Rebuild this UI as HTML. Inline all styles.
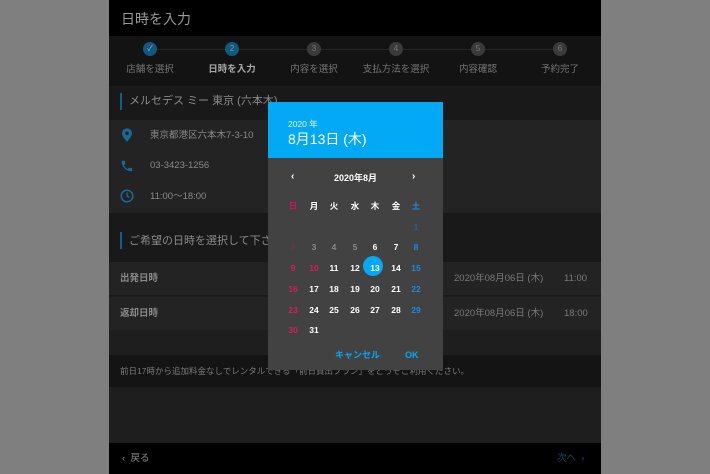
<!DOCTYPE html>
<html><head><meta charset="utf-8"><style>
*{margin:0;padding:0;box-sizing:border-box}
body{width:710px;height:474px;background:#7f7f7f;font-family:"Liberation Sans","Noto Sans CJK JP",sans-serif;position:relative;overflow:hidden}
.app{position:absolute;left:109px;top:0;width:492px;height:474px;background:#1e1e1e}
.abs{position:absolute}
.t{position:absolute;white-space:nowrap;line-height:12px}
.step{position:absolute;top:42px;width:82px;text-align:center;line-height:12px}
.step .c{width:14px;height:14px;border-radius:50%;background:#3a3a3a;color:#777;font-size:8px;line-height:14px;margin:0 auto;}
.step .l{font-size:9.5px;color:#767676;margin-top:8px}
.dlg{position:absolute;left:268px;top:102px;width:175px;height:268px;background:#424242}
.dh{height:56px;background:#03a9f4}
.cal span{position:absolute;width:20px;margin-left:-10px;text-align:center;font-size:8.5px;font-weight:bold;color:#fff;line-height:12px}
</style></head><body>
<div class="app">
 <div class="abs" style="left:0;top:0;width:492px;height:36px;background:#000"></div>
 <div class="t" style="left:12px;top:11px;font-size:14px;line-height:16px;color:#9a9a9a">日時を入力</div>
 <div class="abs" style="left:0;top:36px;width:492px;height:50px;background:#131313"></div>
 <div class="abs" style="left:40px;top:49px;width:415px;height:1px;background:#262626"></div>
 <div class="step" style="left:0"><div class="c" style="background:#11587e;color:#9ab">✓</div><div class="l">店舗を選択</div></div>
 <div class="step" style="left:82px"><div class="c" style="background:#11587e;color:#6a9ab8">2</div><div class="l" style="color:#a8a8a8;font-weight:bold">日時を入力</div></div>
 <div class="step" style="left:164px"><div class="c">3</div><div class="l">内容を選択</div></div>
 <div class="step" style="left:246px"><div class="c">4</div><div class="l">支払方法を選択</div></div>
 <div class="step" style="left:328px"><div class="c">5</div><div class="l">内容確認</div></div>
 <div class="step" style="left:410px"><div class="c">6</div><div class="l">予約完了</div></div>
 <div class="abs" style="left:0;top:86px;width:492px;height:34px;background:#191919"></div>
 <div class="abs" style="left:11px;top:93px;width:2px;height:17px;background:#135d85"></div>
 <div class="t" style="left:20px;top:95px;font-size:11px;line-height:13px;color:#8a8a8a">メルセデス ミー 東京 (六本木)</div>
 <div class="abs" style="left:0;top:120px;width:492px;height:93px;background:#232323"></div>
 <svg class="abs" style="left:13px;top:128px" width="10" height="14" viewBox="0 0 12 16"><path d="M6 0C2.7 0 0 2.6 0 5.9 0 10 6 16 6 16s6-6 6-10.1C12 2.6 9.3 0 6 0zm0 8.2A2.2 2.2 0 1 1 6 3.8a2.2 2.2 0 0 1 0 4.4z" fill="#1a6a98"/></svg>
 <div class="t" style="left:41px;top:130px;font-size:9.5px;color:#8a8a8a">東京都港区六本木7-3-10</div>
 <svg class="abs" style="left:11px;top:159px" width="14" height="14" viewBox="0 0 24 24"><path d="M6.6 10.8c1.4 2.8 3.8 5.1 6.6 6.6l2.2-2.2c.3-.3.7-.4 1-.2 1.1.4 2.3.6 3.6.6.6 0 1 .4 1 1V20c0 .6-.4 1-1 1C10.6 21 3 13.4 3 4c0-.6.4-1 1-1h3.5c.6 0 1 .4 1 1 0 1.3.2 2.5.6 3.6.1.3 0 .7-.2 1z" fill="#1a6a98"/></svg>
 <div class="t" style="left:41px;top:160px;font-size:9.5px;color:#8a8a8a">03-3423-1256</div>
 <svg class="abs" style="left:11px;top:189px" width="14" height="14" viewBox="0 0 14 14"><circle cx="7" cy="7" r="5.8" fill="none" stroke="#1a6a98" stroke-width="1.5"/><path d="M7 3.5V7l2.5 1.5" fill="none" stroke="#1a6a98" stroke-width="1.3"/></svg>
 <div class="t" style="left:41px;top:191px;font-size:9.5px;color:#8a8a8a">11:00〜18:00</div>
 <div class="abs" style="left:0;top:213px;width:492px;height:49px;background:#191919"></div>
 <div class="abs" style="left:11px;top:232px;width:2px;height:17px;background:#135d85"></div>
 <div class="t" style="left:20px;top:235px;font-size:11px;line-height:13px;color:#8a8a8a">ご希望の日時を選択して下さい</div>
 <div class="abs" style="left:0;top:262px;width:492px;height:34px;background:#232323;border-bottom:1px solid #1a1a1a"></div>
 <div class="t" style="left:11px;top:273px;font-size:9.5px;color:#8a8a8a;font-weight:bold">出発日時</div>
 <div class="t" style="left:345px;top:273px;font-size:9.5px;color:#7a7a7a">2020年08月06日 (木)</div>
 <div class="t" style="left:455px;top:273px;font-size:9.5px;color:#7a7a7a">11:00</div>
 <div class="abs" style="left:0;top:297px;width:492px;height:33px;background:#232323"></div>
 <div class="t" style="left:11px;top:308px;font-size:9.5px;color:#8a8a8a;font-weight:bold">返却日時</div>
 <div class="t" style="left:345px;top:308px;font-size:9.5px;color:#7a7a7a">2020年08月06日 (木)</div>
 <div class="t" style="left:455px;top:308px;font-size:9.5px;color:#7a7a7a">18:00</div>
 <div class="abs" style="left:0;top:330px;width:492px;height:25px;background:#1e1e1e"></div>
 <div class="abs" style="left:0;top:355px;width:492px;height:32px;background:#141414"></div>
 <div class="t" style="left:11px;top:365px;font-size:8.5px;color:#7a7a7a">前日17時から追加料金なしでレンタルできる「前日貸出プラン」をどうぞご利用ください。</div>
 <div class="abs" style="left:0;top:387px;width:492px;height:56px;background:#1e1e1e"></div>
 <div class="abs" style="left:0;top:443px;width:492px;height:31px;background:#000"></div>
 <div class="t" style="left:13px;top:453px;font-size:9.5px;color:#8a8a8a">‹&nbsp;&nbsp;戻る</div>
 <div class="t" style="left:448px;top:453px;font-size:9.5px;color:#0f4d70">次へ&nbsp;&nbsp;›</div>
</div>
<div class="dlg">
 <div class="dh"></div>
 <div class="t" style="left:20px;top:16px;font-size:8.5px;color:#dff3fd">2020 年</div>
 <div class="t" style="left:20px;top:29px;font-size:14px;line-height:16px;color:#fff">8月13日 (木)</div>
 <div class="t" style="left:23px;top:69px;font-size:10px;color:#fff;font-weight:bold">‹</div>
 <div class="t" style="left:0;width:175px;text-align:center;top:70px;font-size:9px;color:#fff;font-weight:bold">2020年8月</div>
 <div class="t" style="left:144px;top:69px;font-size:10px;color:#fff;font-weight:bold">›</div>
 <div class="abs" style="left:95px;top:154px;width:20px;height:20px;border-radius:50%;background:#03a9f4"></div>
 <div class="cal">
  <span style="left:25px;top:98px;color:#c2185b">日</span><span style="left:46px;top:98px">月</span><span style="left:66px;top:98px">火</span><span style="left:87px;top:98px">水</span><span style="left:107px;top:98px">木</span><span style="left:128px;top:98px">金</span><span style="left:148px;top:98px;color:#1e88e5">土</span>
  <span style="left:148px;top:119px;color:#2b5f87">1</span>
  <span style="left:25px;top:139px;color:#6e3348">2</span><span style="left:46px;top:139px;color:#888">3</span><span style="left:66px;top:139px;color:#888">4</span><span style="left:87px;top:139px;color:#888">5</span><span style="left:107px;top:139px">6</span><span style="left:128px;top:139px">7</span><span style="left:148px;top:139px;color:#1e88e5">8</span>
  <span style="left:25px;top:160px;color:#d81b60">9</span><span style="left:46px;top:160px;color:#d81b60">10</span><span style="left:66px;top:160px">11</span><span style="left:87px;top:160px">12</span><span style="left:107px;top:160px">13</span><span style="left:128px;top:160px">14</span><span style="left:148px;top:160px;color:#1e88e5">15</span>
  <span style="left:25px;top:181px;color:#d81b60">16</span><span style="left:46px;top:181px">17</span><span style="left:66px;top:181px">18</span><span style="left:87px;top:181px">19</span><span style="left:107px;top:181px">20</span><span style="left:128px;top:181px">21</span><span style="left:148px;top:181px;color:#1e88e5">22</span>
  <span style="left:25px;top:202px;color:#d81b60">23</span><span style="left:46px;top:202px">24</span><span style="left:66px;top:202px">25</span><span style="left:87px;top:202px">26</span><span style="left:107px;top:202px">27</span><span style="left:128px;top:202px">28</span><span style="left:148px;top:202px;color:#1e88e5">29</span>
  <span style="left:25px;top:222px;color:#d81b60">30</span><span style="left:46px;top:222px">31</span>
 </div>
 <div class="t" style="left:67px;top:247px;font-size:9px;color:#03a9f4;font-weight:bold">キャンセル</div>
 <div class="t" style="left:137px;top:247px;font-size:9px;color:#03a9f4;font-weight:bold">OK</div>
</div>
</body></html>
